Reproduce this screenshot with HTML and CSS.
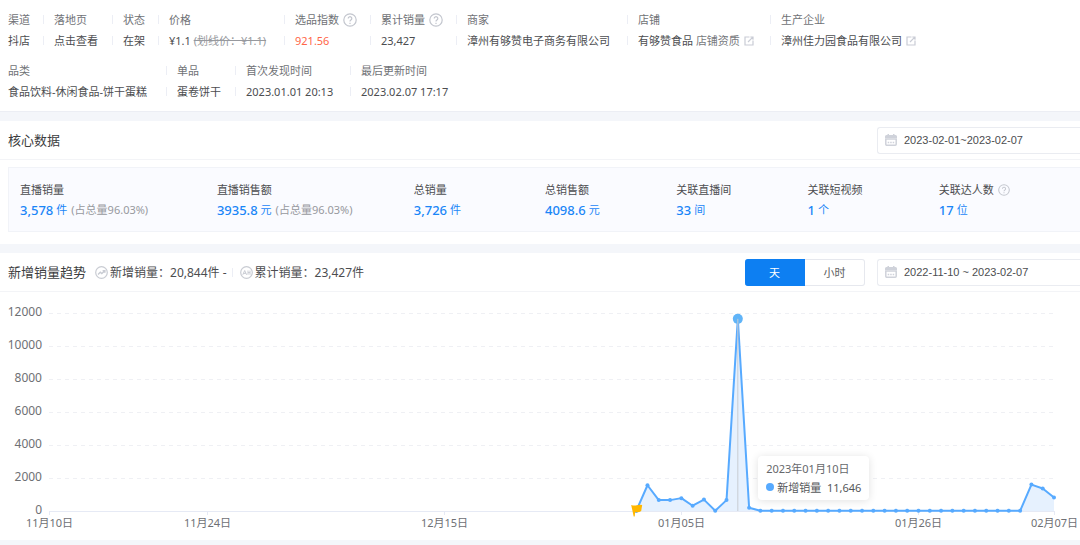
FILE: index.html
```html
<!DOCTYPE html>
<html lang="zh-CN">
<head>
  <meta charset="UTF-8">
  <meta name="viewport" content="width=device-width, initial-scale=1.0">
  <title>商品详情</title>
  <link rel="stylesheet" href="styles.css">
</head>
<body>
  <svg class="defs" width="0" height="0" aria-hidden="true">
    <symbol id="icon-help" viewBox="0 0 14 14">
      <circle cx="7" cy="7" r="6.2" fill="none" stroke="currentColor" stroke-width="1.2"/>
      <path d="M5.2 5.500a1.800 1.800 0 1 1 2.700 1.600c-.6.4-.9.7-.9 1.400M7 9.700v1.200" fill="none" stroke="currentColor" stroke-width="1.2"/>
    </symbol>
    <symbol id="icon-link" viewBox="0 0 10 10">
      <path d="M5.5 1H1v8h8V4.5M4 6l4.600-4.600M6.300 1H9v2.700" fill="none" stroke="currentColor" stroke-width="1.2"/>
    </symbol>
    <symbol id="icon-date" viewBox="0 0 12 12">
      <path d="M1.500 1h9A1.500 1.500 0 0 1 12 2.500V4H0V2.500A1.500 1.500 0 0 1 1.500 1zM2.500 0H4v2H2.500zM8 0h1.500v2H8z" fill="currentColor"/>
      <path d="M.8 5v5.200a1 1 0 0 0 1 1h8.400a1 1 0 0 0 1-1V5z" fill="none" stroke="currentColor" stroke-width="1.500"/>
      <path d="M2.700 8.500h1.500M5.200 8.500h1.500M7.700 8.500h1.500" fill="none" stroke="currentColor" stroke-width="1.600"/>
    </symbol>
    <symbol id="icon-trend" viewBox="0 0 13 13">
      <circle cx="6.500" cy="6.500" r="5.800" fill="none" stroke="currentColor" stroke-width="1.200"/>
      <path d="M3 8.500l2.300-2.200 1.500 1.300L9.800 4.800M7.600 4.600h2.300v2.200" fill="none" stroke="currentColor" stroke-width="1.400"/>
    </symbol>
    <symbol id="icon-total" viewBox="0 0 13 13">
      <circle cx="6.500" cy="6.500" r="5.800" fill="none" stroke="currentColor" stroke-width="1.200"/>
      <path d="M2.800 8.800L4.700 4.500l1.900 4.300M3.500 7.400h2.400M8 8.800V4.500M10 4.500v4.300M8 6.600h2" fill="none" stroke="currentColor"/>
    </symbol>
  </svg>

  <section class="panel info">
    <dl class="fields fields-main">
      <div><dt>渠道</dt><dd>抖店</dd></div>
      <div><dt>落地页</dt><dd><a href="#">点击查看</a></dd></div>
      <div><dt>状态</dt><dd>在架</dd></div>
      <div><dt>价格</dt><dd>¥1.1&nbsp;<del>(划线价：¥1.1)</del></dd></div>
      <div><dt>选品指数<svg class="help"><use href="#icon-help"/></svg></dt><dd class="score">921.56</dd></div>
      <div><dt>累计销量<svg class="help"><use href="#icon-help"/></svg></dt><dd>23,427</dd></div>
      <div><dt>商家</dt><dd>漳州有够赞电子商务有限公司</dd></div>
      <div><dt>店铺</dt><dd>有够赞食品&nbsp;<a class="sub" href="#">店铺资质<svg class="link"><use href="#icon-link"/></svg></a></dd></div>
      <div><dt>生产企业</dt><dd><a href="#">漳州佳力园食品有限公司<svg class="link"><use href="#icon-link"/></svg></a></dd></div>
    </dl>
    <dl class="fields fields-more">
      <div><dt>品类</dt><dd>食品饮料-休闲食品-饼干蛋糕</dd></div>
      <div><dt>单品</dt><dd>蛋卷饼干</dd></div>
      <div><dt>首次发现时间</dt><dd>2023.01.01 20:13</dd></div>
      <div><dt>最后更新时间</dt><dd>2023.02.07 17:17</dd></div>
    </dl>
  </section>

  <section class="panel core">
    <header class="bar">
      <h2>核心数据</h2>
      <label class="date">
        <svg><use href="#icon-date"/></svg>
        <input type="text" value="2023-02-01~2023-02-07" aria-label="核心数据日期">
      </label>
    </header>
    <ul class="stats">
      <li>直播销量<p><b>3,578</b><i>件</i><small>(占总量96.03%)</small></p></li>
      <li>直播销售额<p><b>3935.8</b><i>元</i><small>(占总量96.03%)</small></p></li>
      <li>总销量<p><b>3,726</b><i>件</i></p></li>
      <li>总销售额<p><b>4098.6</b><i>元</i></p></li>
      <li>关联直播间<p><b>33</b><i>间</i></p></li>
      <li>关联短视频<p><b>1</b><i>个</i></p></li>
      <li>关联达人数<svg class="help small"><use href="#icon-help"/></svg><p><b>17</b><i>位</i></p></li>
    </ul>
  </section>

  <section class="panel trend">
    <header class="bar">
      <h2>新增销量趋势</h2>
      <p class="totals">
        <span><svg><use href="#icon-trend"/></svg>新增销量：20,844件 -</span>
        <span><svg><use href="#icon-total"/></svg>累计销量：23,427件</span>
      </p>
      <div class="switch">
        <button type="button" class="active">天</button>
        <button type="button">小时</button>
      </div>
      <label class="date">
        <svg><use href="#icon-date"/></svg>
        <input type="text" value="2022-11-10 ~ 2023-02-07" aria-label="趋势日期">
      </label>
    </header>
    <div class="chart">
      <svg id="plot" viewBox="0 0 1080 248" role="img" aria-label="新增销量趋势"></svg>
      <div class="tooltip">
        <p>2023年01月10日</p>
        <p class="row"><span class="dot"></span>新增销量&nbsp; 11,646</p>
      </div>
    </div>
  </section>

  <script src="chart.js"></script>
</body>
</html>
```
FILE: styles.css
```css
* {
  box-sizing: border-box;
}
body {
  margin: 0;
  background: #f4f6fa;
  font-family: "Noto Sans", "Noto Sans CJK SC", sans-serif;
  font-size: 11px;
  line-height: 21px;
  color: #4c4d50;
  overflow-x: hidden;
}
h2, p, dl, dd, ul {
  margin: 0;
  padding: 0;
}
a {
  color: inherit;
  text-decoration: none;
}
.defs {
  position: absolute;
}
.panel {
  background: #fff;
  margin-bottom: 9px;
}

/* product info */
.info {
  padding: 9px 0 9px 8px;
  border-bottom: 1px solid #eceef4;
}
.fields {
  display: grid;
}
.fields-main {
  grid-template-columns: 35px 69px 46px 126px 86px 86px 171px 143px 1fr;
  margin-bottom: 9px;
}
.fields-more {
  grid-template-columns: 158px 69px 115px 1fr;
}
.fields dt,
.fields dd {
  display: flex;
  align-items: center;
  white-space: nowrap;
}
.fields dt {
  color: #707276;
}
.fields div + div dt::before,
.fields div + div dd::before {
  content: '';
  width: 1px;
  height: 9px;
  margin-right: 10px;
  background: #eceef5;
}
.fields del {
  color: #97999e;
}
.fields .sub {
  color: #77797d;
}
.fields .score {
  color: #ff6648;
}
.help {
  width: 14px;
  height: 14px;
  margin-left: 4px;
  color: #c3c6ce;
}
.help.small {
  width: 12px;
  height: 12px;
  vertical-align: -2px;
}
.link {
  width: 10px;
  height: 10px;
  margin-left: 4px;
  color: #c9ccd5;
  vertical-align: -1px;
}

/* section headers */
.bar {
  display: flex;
  align-items: center;
  height: 39px;
  padding-left: 8px;
  border-bottom: 1px solid #f3f4f7;
}
.bar h2 {
  font-size: 13px;
  font-weight: 400;
  color: #3c3d40;
}
.date {
  display: flex;
  align-items: center;
  gap: 7px;
  width: 203px;
  height: 27px;
  margin-left: auto;
  padding-left: 7px;
  border: 1px solid #eaecf1;
  border-right: 0;
  border-radius: 3px 0 0 3px;
}
.date svg {
  flex: none;
  width: 12px;
  height: 12px;
  color: #cfd2da;
}
.date input {
  flex: 1;
  min-width: 0;
  padding: 0;
  border: 0;
  outline: 0;
  background: none;
  color: #4c4d50;
  font-family: "Liberation Sans", Arial, sans-serif;
  font-size: 11px;
}

/* core numbers */
.core {
  padding-bottom: 12px;
}
.stats {
  display: grid;
  grid-template-columns: 3fr 3fr 2fr 2fr 2fr 2fr 2fr;
  margin: 7px 0 0 8px;
  padding: 12px 10px 11px 11px;
  border: 1px solid #f1f3f8;
  border-right: 0;
  background: #fafbff;
  line-height: 20px;
  list-style: none;
  white-space: nowrap;
}
.stats p {
  display: flex;
  align-items: center;
  color: #1a86f7;
}
.stats b {
  font-size: 13px;
  font-weight: 500;
}
.stats i {
  margin-left: 3px;
  font-style: normal;
}
.stats small {
  margin-left: 4px;
  font-size: 11px;
  color: #97999e;
}

/* trend */
.trend {
  margin-bottom: 5px;
}
.totals {
  display: flex;
  margin-left: 9px;
  font-size: 12px;
}
.totals span {
  display: flex;
  align-items: center;
}
.totals span + span::before {
  content: '';
  width: 1px;
  height: 9px;
  margin: 0 7px 0 5px;
  background: #eceef5;
}
.totals svg {
  width: 13px;
  height: 13px;
  margin-right: 2px;
  color: #c9ccd3;
}
.switch {
  display: flex;
  margin: 0 12px 0 auto;
}
.switch + .date {
  margin-left: 0;
}
.switch button {
  width: 60px;
  height: 27px;
  padding: 0;
  border: 1px solid #e6e8ee;
  border-left: 0;
  border-radius: 0 3px 3px 0;
  background: #fff;
  color: #5c5d60;
  font-family: inherit;
  font-size: 11px;
}
.switch .active {
  border-color: #0d7ff2;
  border-radius: 3px 0 0 3px;
  background: #0d7ff2;
  color: #fff;
}
.chart {
  position: relative;
}
#plot {
  display: block;
  width: 100%;
}
#plot text {
  fill: #6e7074;
  font-size: 11px;
}
#plot .y {
  font-size: 12px;
  text-anchor: end;
}
#plot .x {
  text-anchor: middle;
}
#plot .grid {
  stroke: #eff0f4;
  stroke-dasharray: 4 4;
}
#plot .axis {
  stroke: #e6eaf5;
}
#plot .area {
  fill: #e6f1fe;
}
#plot .line {
  fill: none;
  stroke: #57aaff;
  stroke-width: 2;
  stroke-linejoin: round;
}
#plot .point {
  fill: #57aaff;
}
#plot .peak {
  fill: #60b4f8;
}
#plot .pointer {
  stroke: #c8ccd2;
}
#plot .flag {
  fill: #ffb700;
}
.tooltip {
  position: absolute;
  left: 70.2%;
  top: 66%;
  padding: 3px 8px;
  border-radius: 4px;
  background: #fff;
  box-shadow: 0 1px 8px rgba(0, 0, 0, 0.12);
  line-height: 19px;
  color: #66686b;
  white-space: nowrap;
}
.tooltip .row {
  display: flex;
  align-items: center;
  color: #55575a;
}
.dot {
  width: 8px;
  height: 8px;
  margin-right: 3px;
  border-radius: 50%;
  background: #57aaff;
}
```
FILE: chart.js
```js
const plot = document.getElementById('plot');
const left = 49, right = 1054, top0 = 21, bottom = 219;
const max = 12000, days = 90;

// daily sales from 2023-01-01 (day 52) to 2023-02-07 (day 89)
const sales = [0, 1560, 660, 660, 780, 320, 690, 20, 660, 11646, 200]
  .concat(Array(24).fill(10), [1600, 1360, 820]);
const start = days - sales.length;

const x = day => left + day * (right - left) / (days - 1);
const y = value => bottom - value / max * (bottom - top0);

let out = '';
for (let v = 0; v <= max; v += 2000) {
  const gy = Math.round(y(v)) + 0.5;
  out += `<line class="${v ? 'grid' : 'axis'}" x1="${left}" x2="${right}" y1="${gy}" y2="${gy}"/>`;
  out += `<text class="y" x="42" y="${gy + 2}">${v}</text>`;
}

const labels = { 0: '11月10日', 14: '11月24日', 35: '12月15日', 56: '01月05日', 77: '01月26日', 89: '02月07日' };
for (const day in labels) {
  const gx = Math.round(x(day)) + 0.5;
  out += `<line class="axis" x1="${gx}" x2="${gx}" y1="${bottom}" y2="${bottom + 4}"/>`;
  out += `<text class="x" x="${gx}" y="235">${labels[day]}</text>`;
}

const points = sales.map((v, i) => [x(start + i), y(v)]);
const path = points.map(p => p.join(',')).join(' ');
const peak = points[sales.indexOf(Math.max(...sales))];

out += `<polygon class="area" points="${points[0][0]},${bottom} ${path} ${right},${bottom}"/>`;
out += `<polyline class="line" points="${path}"/>`;
out += points.map(p => `<circle class="point" cx="${p[0]}" cy="${p[1]}" r="2"/>`).join('');
out += `<circle class="peak" cx="${peak[0]}" cy="${peak[1]}" r="5"/>`;
out += `<line class="pointer" x1="${peak[0]}" x2="${peak[0]}" y1="${peak[1]}" y2="${bottom}"/>`;

// first-seen flag
const fx = points[0][0], fy = bottom;
out += `<path class="flag" d="M${fx - 5} ${fy - 6}q3 1 5.500 .3t5.500-.3l-1 6q-2.500 2-6 1l-.5 4.500h-1z"/>`;

plot.innerHTML = out;
```
